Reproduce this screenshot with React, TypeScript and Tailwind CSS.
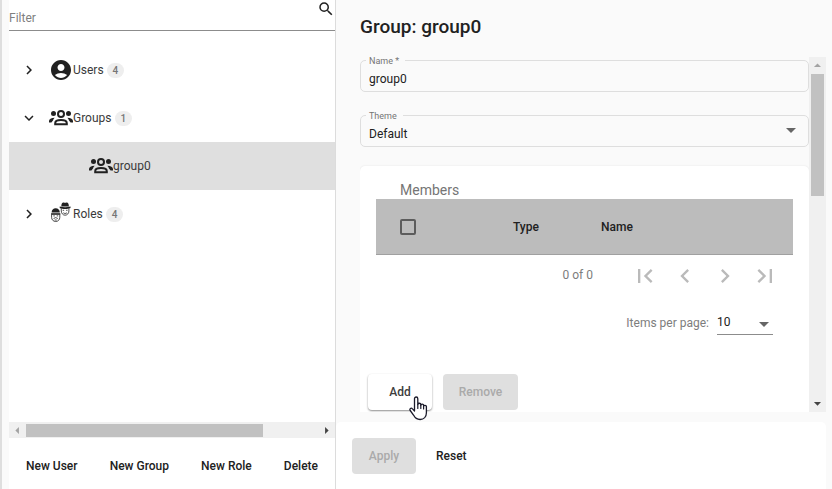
import React, { useState } from "react";
import {
  MdAccountCircle,
  MdArrowDropDown,
  MdArrowDropUp,
  MdArrowLeft,
  MdArrowRight,
  MdChevronLeft,
  MdChevronRight,
  MdExpandMore,
  MdFirstPage,
  MdLastPage,
  MdSearch,
} from "react-icons/md";

function GroupIcon() {
  return (
    <svg width="24" height="24" viewBox="0 0 24 24" className="shrink-0 text-[#212121]" aria-hidden="true">
      <g fill="currentColor">
        <circle cx="4.5" cy="7.6" r="2.500" />
        <circle cx="19.5" cy="7.6" r="2.500" />
        <path d="M0 16.500v-1.600c0-1.800 2.200-3 5.600-3.200-.9.900-1.500 1.900-1.600 2.900L2.400 16.500zM24 16.500v-1.600c0-1.800-2.200-3-5.600-3.200.9.900 1.500 1.900 1.600 2.900l1.600 1.900z" />
      </g>
      <g fill="none" stroke="currentColor" strokeWidth="2">
        <circle cx="12" cy="8" r="3" />
        <path d="M6.200 18.200v-1c0-1.900 2.500-3.200 5.800-3.200s5.800 1.300 5.800 3.200v1z" />
      </g>
    </svg>
  );
}

function RolesIcon() {
  return (
    <svg width="24" height="24" viewBox="0 0 24 24" className="shrink-0 text-[#212121]" aria-hidden="true">
      <g fill="none" stroke="currentColor" strokeWidth="0.8">
        <path d="M12.300 6.500v2.400c0 2.400 1.600 4.300 3.800 4.300s3.800-1.900 3.800-4.300V6.500" />
        <path d="M2.600 12.500v2.800c0 2.400 1.700 4.200 4.100 4.200s4.100-1.800 4.100-4.200v-2.800" />
        <path d="M14.300 10.800c1.200.9 2.400.9 3.600 0M4.600 16.500l2.100-.9 2.100.9M5.700 18h2" />
        <path d="M13.700 8.300h1.400M17.100 8.300h1.400M4.300 13.900h1.500M7.700 13.900h1.500" />
      </g>
      <g fill="currentColor">
        <path d="M12.300 4.600c0-3.200 1.200-4.500 2.400-4.100 1 .3 1.900.3 2.800 0 1.200-.4 2.400.9 2.400 4.100z" />
        <path d="M10.700 4.400c3.600 1 7.200 1 10.800 0v1.600c-2.900 1.400-7.900 1.400-10.800 0z" />
        <path d="M2.600 10.500c0-2.500 1.700-4.200 4.100-4.200s4.100 1.700 4.100 4.200z" />
        <path d="M2.100 11.200h9.200v1.600H2.100z" />
      </g>
    </svg>
  );
}

function HandCursor() {
  return (
    <svg
      width="19"
      height="25"
      viewBox="0 0 19 25"
      className="pointer-events-none absolute top-[396px] left-[409px] z-10"
      aria-hidden="true"
    >
      <path
        d="M5.500 15V2.700c0-2.300 3.300-2.300 3.300 0V8.500c0-1.700 3-1.700 3 0v.8c0-1.600 2.800-1.600 2.800 0v1c0-1.400 2.800-1.400 2.800.3v6.200c0 3.900-2.600 6.700-6.300 6.700-3.400 0-5.200-1.700-6.400-4.200L1.200 14.500c-1-1.800.9-3.200 2.300-1.600z"
        fill="#fff"
        stroke="#1a1a2a"
        strokeWidth="1.300"
        strokeLinejoin="round"
      />
      <path d="M8.800 8.500v4M11.800 9v3.500M14.600 10v3" stroke="#1a1a2a" strokeWidth="1.200" strokeLinecap="round" />
    </svg>
  );
}

interface TreeNode {
  label: string;
  count?: number;
  level: number;
  icon: React.ReactNode;
  open?: boolean;
  selected?: boolean;
}

const nodes: TreeNode[] = [
  { label: "Users", count: 4, level: 0, icon: <MdAccountCircle size={24} className="shrink-0 text-[#212121]" /> },
  { label: "Groups", count: 1, level: 0, icon: <GroupIcon />, open: true },
  { label: "group0", level: 1, icon: <GroupIcon />, selected: true },
  { label: "Roles", count: 4, level: 0, icon: <RolesIcon /> },
];

const actions = ["New User", "New Group", "New Role", "Delete"];

function Tree() {
  return (
    <ul>
      {nodes.map((node) => (
        <li
          key={node.label}
          className={`flex h-12 items-center text-xs text-[#3a3a3a] ${node.selected ? "bg-[#dfdfdf] pl-20" : ""}`}
        >
          {node.level === 0 && (
            <button aria-label={`Toggle ${node.label}`} className="flex w-10 justify-center text-[#212121]">
              {node.open ? <MdExpandMore size={18} /> : <MdChevronRight size={18} />}
            </button>
          )}
          {node.icon}
          <span>{node.label}</span>
          {node.count && (
            <span className="ml-[3px] rounded-full bg-[#eeeeee] px-1.5 text-[10px] leading-[15px] font-medium text-[#757575]">
              {node.count}
            </span>
          )}
        </li>
      ))}
    </ul>
  );
}

export default function App() {
  const [filter, setFilter] = useState("");
  const [name, setName] = useState("group0");
  const [theme, setTheme] = useState("Default");

  return (
    <div className="relative flex h-screen overflow-hidden bg-[#fafafa] font-[Roboto,sans-serif] text-xs text-[#212121]">
      <div className="mr-[7px] w-0.5 shrink-0 bg-[#dedede]" />
      <aside className="flex w-[327px] shrink-0 flex-col border-r border-[#dcdcdc] bg-white">
        <div className="flex h-[31px] items-end border-b border-[#8c8c8c]">
          <input
            aria-label="Filter"
            placeholder="Filter"
            value={filter}
            onChange={(e) => setFilter(e.target.value)}
            className="h-6 min-w-0 flex-1 outline-none placeholder:text-[#808080]"
          />
          <button aria-label="Search" className="self-start">
            <MdSearch size={18} />
          </button>
        </div>

        <div className="min-h-0 flex-1 overflow-hidden pt-[15px]">
          <Tree />
        </div>

        <div className="flex h-4 items-center bg-[#f0f0f0]">
          <MdArrowLeft size={17} className="shrink-0 text-[#a3a3a3]" />
          <div className="flex-1">
            <div className="h-[13px] w-[81%] bg-[#c1c1c1]" />
          </div>
          <MdArrowRight size={17} className="shrink-0 text-[#444444]" />
        </div>

        <div className="flex h-[51px] items-center justify-between px-[17px] pt-1 font-medium">
          {actions.map((action) => (
            <button key={action} className="whitespace-nowrap">
              {action}
            </button>
          ))}
        </div>
      </aside>

      <main className="flex min-w-0 flex-1 flex-col pr-1.5">
        <h1 className="flex h-[57px] shrink-0 items-center pb-1 pl-6 text-[19px] font-medium">Group: {name}</h1>

        <div className="flex min-h-0 flex-1 pl-6">
          <div className="min-w-0 flex-1 overflow-hidden pt-[3px]">
            <div className="relative mb-[23px] h-8 rounded-[5px] border border-[#dedede]">
              <label htmlFor="name" className="absolute -top-1.5 left-[5px] bg-[#fafafa] pr-1.5 pl-[3px] text-[9px] leading-3 text-[#757575]">
                Name *
              </label>
              <input
                id="name"
                value={name}
                onChange={(e) => setName(e.target.value)}
                className="h-full w-full px-2 pt-1.5 outline-none"
              />
            </div>

            <div className="relative mb-[19px] h-8 rounded-[5px] border border-[#dedede]">
              <label htmlFor="theme" className="absolute -top-1.5 left-[5px] bg-[#fafafa] pr-1.5 pl-[3px] text-[9px] leading-3 text-[#757575]">
                Theme
              </label>
              <select
                id="theme"
                value={theme}
                onChange={(e) => setTheme(e.target.value)}
                className="h-full w-full appearance-none px-2 pt-1.5 outline-none"
              >
                <option>Default</option>
              </select>
              <MdArrowDropDown size={24} className="pointer-events-none absolute top-0.5 right-[5px] text-[#666666]" />
            </div>

            <section className="h-[300px] rounded-[5px] bg-white pt-[15px] shadow-[0_0_2px_rgba(0,0,0,0.1)]">
              <h2 className="pl-10 text-sm leading-[18px] text-[#757575]">Members</h2>
              <div className="px-4">
                <table className="w-full table-fixed border-b border-[#a0a0a0] bg-[#bcbcbc]">
                  <thead>
                    <tr className="h-[55px] text-left">
                      <th className="w-[137px] pt-0.5 pl-6">
                        <input
                          type="checkbox"
                          aria-label="Select all members"
                          className="block size-4 appearance-none rounded-[2px] border-2 border-[#5c5c5c]"
                        />
                      </th>
                      <th className="w-[88px] pt-0.5 font-medium">Type</th>
                      <th className="pt-0.5 font-medium">Name</th>
                    </tr>
                  </thead>
                </table>
                <div className="flex flex-col items-end text-[#7d7d7d]">
                  <div className="flex h-10 items-center pr-2">
                    <span className="mr-8">0 of 0</span>
                    <div className="flex pt-0.5 text-[#bababa]">
                      <button disabled aria-label="First page" className="flex w-10 justify-center">
                        <MdFirstPage size={28} />
                      </button>
                      <button disabled aria-label="Previous page" className="flex w-10 justify-center">
                        <MdChevronLeft size={28} />
                      </button>
                      <button disabled aria-label="Next page" className="flex w-10 justify-center">
                        <MdChevronRight size={28} />
                      </button>
                      <button disabled aria-label="Last page" className="flex w-10 justify-center">
                        <MdLastPage size={28} />
                      </button>
                    </div>
                  </div>
                  <div className="flex h-14 items-center pr-5">
                    <label htmlFor="page-size" className="mr-2">
                      Items per page:
                    </label>
                    <div className="relative w-14 border-b border-[#8c8c8c]">
                      <select id="page-size" className="h-6 w-full appearance-none text-[#212121] outline-none">
                        <option>10</option>
                      </select>
                      <MdArrowDropDown
                        size={24}
                        className="pointer-events-none absolute top-0.5 -right-[3px] text-[#666666]"
                      />
                    </div>
                  </div>
                </div>
              </div>
              <div className="flex gap-[11px] pt-[23px] pl-2 font-medium">
                <button className="h-9 w-16 rounded-[4px] bg-white text-[#3d3d3d] shadow-[0_1px_2px_rgba(0,0,0,0.45)]">
                  Add
                </button>
                <button disabled className="h-9 w-[75px] rounded-[4px] bg-[#dfdfdf] text-[#aaaaaa]">
                  Remove
                </button>
              </div>
            </section>
          </div>

          <div className="flex w-[17px] shrink-0 flex-col items-center bg-[#f0f0f0]">
            <MdArrowDropUp size={17} className="shrink-0 text-[#a3a3a3]" />
            <div className="w-[13px] flex-1">
              <div className="h-[38%] bg-[#c1c1c1]" />
            </div>
            <MdArrowDropDown size={17} className="shrink-0 text-[#444444]" />
          </div>
        </div>

        <footer className="mt-2.5 flex h-[67px] shrink-0 items-center gap-5 rounded-t-[5px] bg-white pl-4 font-medium">
          <button disabled className="h-9 w-16 rounded-[4px] bg-[#dfdfdf] text-[#aaaaaa]">
            Apply
          </button>
          <button>Reset</button>
        </footer>
      </main>

      <HandCursor />
    </div>
  );
}
